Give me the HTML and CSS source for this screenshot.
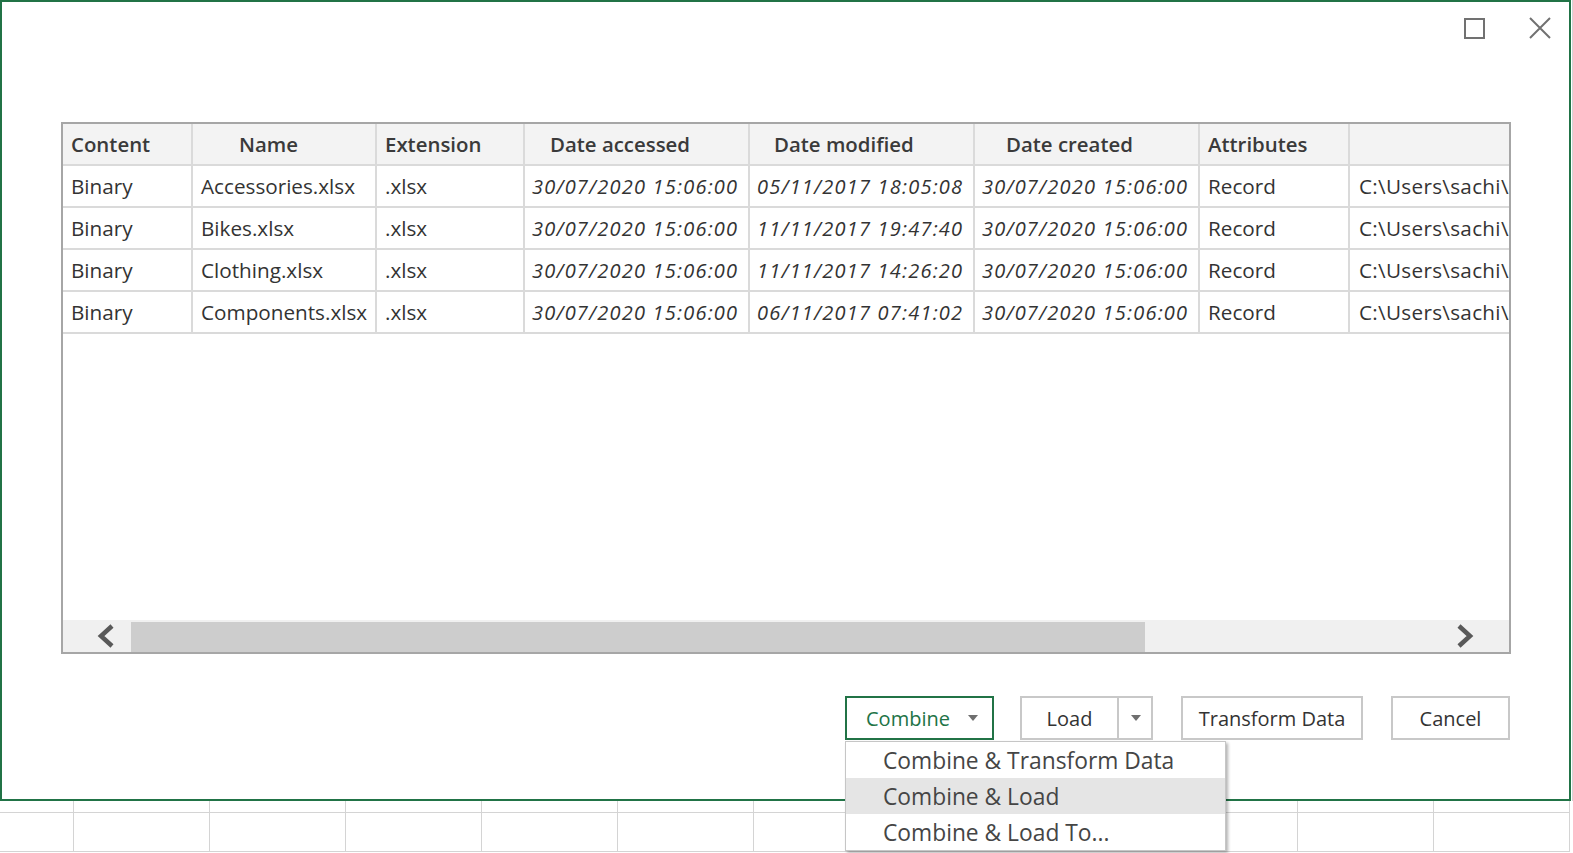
FILE: index.html
```html
<!DOCTYPE html>
<html lang="en">
<head>
<meta charset="utf-8">
<title>Navigator</title>
<link rel="stylesheet" href="styles.css">
</head>
<body>
<div class="page">
  <div class="top">
    <div class="dialog">
      <div class="titlebar">
        <svg class="winicon" width="21" height="21" viewBox="0 0 21 21"><rect x="1" y="1" width="19" height="19" fill="none" stroke="#717171" stroke-width="2"/></svg>
        <svg class="winicon close" width="22" height="22" viewBox="0 0 22 22"><path d="M1 1 L21 21 M21 1 L1 21" fill="none" stroke="#717171" stroke-width="2"/></svg>
      </div>
      <div class="tablebox">
        <div class="grid">
          <div class="cell head h-content">Content</div>
          <div class="cell head h-name">Name</div>
          <div class="cell head h-ext">Extension</div>
          <div class="cell head h-date1">Date accessed</div>
          <div class="cell head h-date2">Date modified</div>
          <div class="cell head h-date3">Date created</div>
          <div class="cell head h-attr">Attributes</div>
          <div class="cell head h-last"></div>

          <div class="cell">Binary</div>
          <div class="cell">Accessories.xlsx</div>
          <div class="cell">.xlsx</div>
          <div class="cell date">30/07/2020 15:06:00</div>
          <div class="cell date">05/11/2017 18:05:08</div>
          <div class="cell date">30/07/2020 15:06:00</div>
          <div class="cell attr">Record</div>
          <div class="cell path">C:\Users\sachi\</div>

          <div class="cell">Binary</div>
          <div class="cell">Bikes.xlsx</div>
          <div class="cell">.xlsx</div>
          <div class="cell date">30/07/2020 15:06:00</div>
          <div class="cell date">11/11/2017 19:47:40</div>
          <div class="cell date">30/07/2020 15:06:00</div>
          <div class="cell attr">Record</div>
          <div class="cell path">C:\Users\sachi\</div>

          <div class="cell">Binary</div>
          <div class="cell">Clothing.xlsx</div>
          <div class="cell">.xlsx</div>
          <div class="cell date">30/07/2020 15:06:00</div>
          <div class="cell date">11/11/2017 14:26:20</div>
          <div class="cell date">30/07/2020 15:06:00</div>
          <div class="cell attr">Record</div>
          <div class="cell path">C:\Users\sachi\</div>

          <div class="cell">Binary</div>
          <div class="cell">Components.xlsx</div>
          <div class="cell">.xlsx</div>
          <div class="cell date">30/07/2020 15:06:00</div>
          <div class="cell date">06/11/2017 07:41:02</div>
          <div class="cell date">30/07/2020 15:06:00</div>
          <div class="cell attr">Record</div>
          <div class="cell path">C:\Users\sachi\</div>
        </div>
        <div class="filler"></div>
        <div class="hscroll">
          <div class="arrow left">
            <svg width="20" height="24" viewBox="0 0 20 24"><polyline points="16,2 5,12 16,22" fill="none" stroke="#595959" stroke-width="4.5"/></svg>
          </div>
          <div class="thumb"></div>
          <div class="track-rest">
            <svg width="20" height="24" viewBox="0 0 20 24"><polyline points="4,2 15,12 4,22" fill="none" stroke="#595959" stroke-width="4.5"/></svg>
          </div>
        </div>
      </div>
      <div class="buttons">
        <div class="combine-wrap">
          <div class="btn combine">
            <span>Combine</span>
            <svg class="caret" width="10" height="6" viewBox="0 0 10 6"><polygon points="0,0 10,0 5,6" fill="#6f6f6f"/></svg>
          </div>
          <div class="menu">
            <div class="menu-item">Combine &amp; Transform Data</div>
            <div class="menu-item active">Combine &amp; Load</div>
            <div class="menu-item">Combine &amp; Load To...</div>
          </div>
        </div>
        <div class="btn split">
          <span class="split-main">Load</span>
          <span class="split-arrow"><svg class="caret" width="10" height="6" viewBox="0 0 10 6"><polygon points="0,0 10,0 5,6" fill="#6f6f6f"/></svg></span>
        </div>
        <div class="btn transform">Transform Data</div>
        <div class="btn cancel">Cancel</div>
      </div>
    </div>
    <div class="edge"></div>
  </div>
  <div class="sheet">
    <div class="sc first"></div><div class="sc"></div><div class="sc"></div><div class="sc"></div><div class="sc"></div><div class="sc"></div><div class="sc"></div><div class="sc"></div><div class="sc"></div><div class="sc"></div><div class="sc"></div><div class="sc"></div>
    <div class="sc tall first"></div><div class="sc tall"></div><div class="sc tall"></div><div class="sc tall"></div><div class="sc tall"></div><div class="sc tall"></div><div class="sc tall"></div><div class="sc tall"></div><div class="sc tall"></div><div class="sc tall"></div><div class="sc tall"></div><div class="sc tall"></div>
  </div>
</div>
</body>
</html>
```

FILE: styles.css
```css
* { box-sizing: border-box; }
html, body {
  margin: 0;
  padding: 0;
  background: #ffffff;
}
body {
  width: 1573px;
  height: 853px;
  overflow: hidden;
  font-family: "Open Sans", "Noto Sans", sans-serif;
  color: #333333;
}
.page {
  display: flex;
  flex-direction: column;
  width: 1573px;
  height: 853px;
}
.top {
  display: flex;
  height: 801px;
}
.edge {
  width: 2px;
  border-right: 1px solid #d4d4d4;
}
.dialog {
  width: 1571px;
  height: 801px;
  border: 2px solid #217346;
  background: #ffffff;
  display: flex;
  flex-direction: column;
}
.titlebar {
  height: 120px;
  display: flex;
  justify-content: flex-end;
  align-items: flex-start;
  gap: 44px;
  padding-top: 16px;
  padding-right: 18px;
}
.titlebar .close { margin-top: -1px; }

.tablebox {
  margin-left: 59px;
  width: 1450px;
  height: 532px;
  border: 2px solid #a6a6a6;
  display: flex;
  flex-direction: column;
  overflow: hidden;
}
.grid {
  display: grid;
  grid-template-columns: 130px 184px 148px 225px 225px 225px 150px 159px;
  grid-auto-rows: 42px;
}
.cell {
  border-right: 2px solid #dadada;
  border-bottom: 2px solid #dadada;
  display: flex;
  align-items: center;
  padding-left: 8px;
  font-size: 20.7px;
  white-space: nowrap;
  overflow: hidden;
  color: #333333;
}
.cell.date {
  font-style: italic;
  font-size: 20px;
  letter-spacing: 1.2px;
  padding-left: 7px;
}
.cell.attr { padding-left: 8px; }
.cell.path {
  padding-left: 9px;
  letter-spacing: 0.3px;
  border-right: none;
}
.head {
  background: #f3f3f3;
  font-weight: 600;
  font-size: 20.4px;
  color: #3a3a3a;
}
.h-content { padding-left: 8px; }
.h-name { padding-left: 46px; }
.h-ext { padding-left: 8px; }
.h-date1 { padding-left: 25px; }
.h-date2 { padding-left: 24px; }
.h-date3 { padding-left: 31px; }
.h-attr { padding-left: 8px; }
.h-last { border-right: none; }

.filler { flex: 1; }
.hscroll {
  height: 32px;
  background: #f0f0f0;
  display: flex;
  align-items: flex-end;
}
.arrow {
  width: 68px;
  height: 32px;
  display: flex;
  align-items: center;
  padding-left: 33px;
}
.thumb {
  width: 1014px;
  height: 30px;
  background: #cdcdcd;
}
.track-rest {
  flex: 1;
  height: 32px;
  display: flex;
  align-items: center;
  padding-left: 310px;
}

.buttons {
  margin-top: 42px;
  display: flex;
  justify-content: flex-end;
  padding-right: 59px;
  gap: 28px;
}
.btn {
  height: 44px;
  border: 2px solid #c8c8c8;
  background: #ffffff;
  font-size: 20px;
  color: #333333;
  display: flex;
  align-items: center;
  justify-content: center;
}
.combine-wrap {
  position: relative;
  margin-right: -2px;
}
.combine {
  width: 149px;
  border-color: #217346;
  color: #217346;
  justify-content: flex-start;
  padding-left: 19px;
  gap: 18px;
}
.caret { display: block; }
.split {
  width: 133px;
  justify-content: flex-start;
}
.split-main {
  width: 97px;
  height: 40px;
  display: flex;
  align-items: center;
  justify-content: center;
  border-right: 2px solid #c8c8c8;
}
.split-arrow {
  flex: 1;
  display: flex;
  justify-content: center;
  padding-left: 1px;
}
.transform { width: 182px; }
.cancel { width: 119px; }

.menu {
  position: absolute;
  left: 0;
  top: 45px;
  width: 381px;
  background: #ffffff;
  border: 1px solid #c6c6c6;
  box-shadow: 2px 2px 3px rgba(0, 0, 0, 0.3);
  z-index: 10;
}
.menu-item {
  height: 36px;
  display: flex;
  align-items: center;
  padding-left: 37px;
  font-size: 22.8px;
  color: #454545;
  white-space: nowrap;
}
.menu-item.active { background: #e5e5e5; }

.sheet {
  display: grid;
  grid-template-columns: 74px repeat(11, 136px);
  grid-template-rows: 12px 39px;
}
.sc {
  border-right: 1px solid #d4d4d4;
  border-bottom: 1px solid #d4d4d4;
}
```
